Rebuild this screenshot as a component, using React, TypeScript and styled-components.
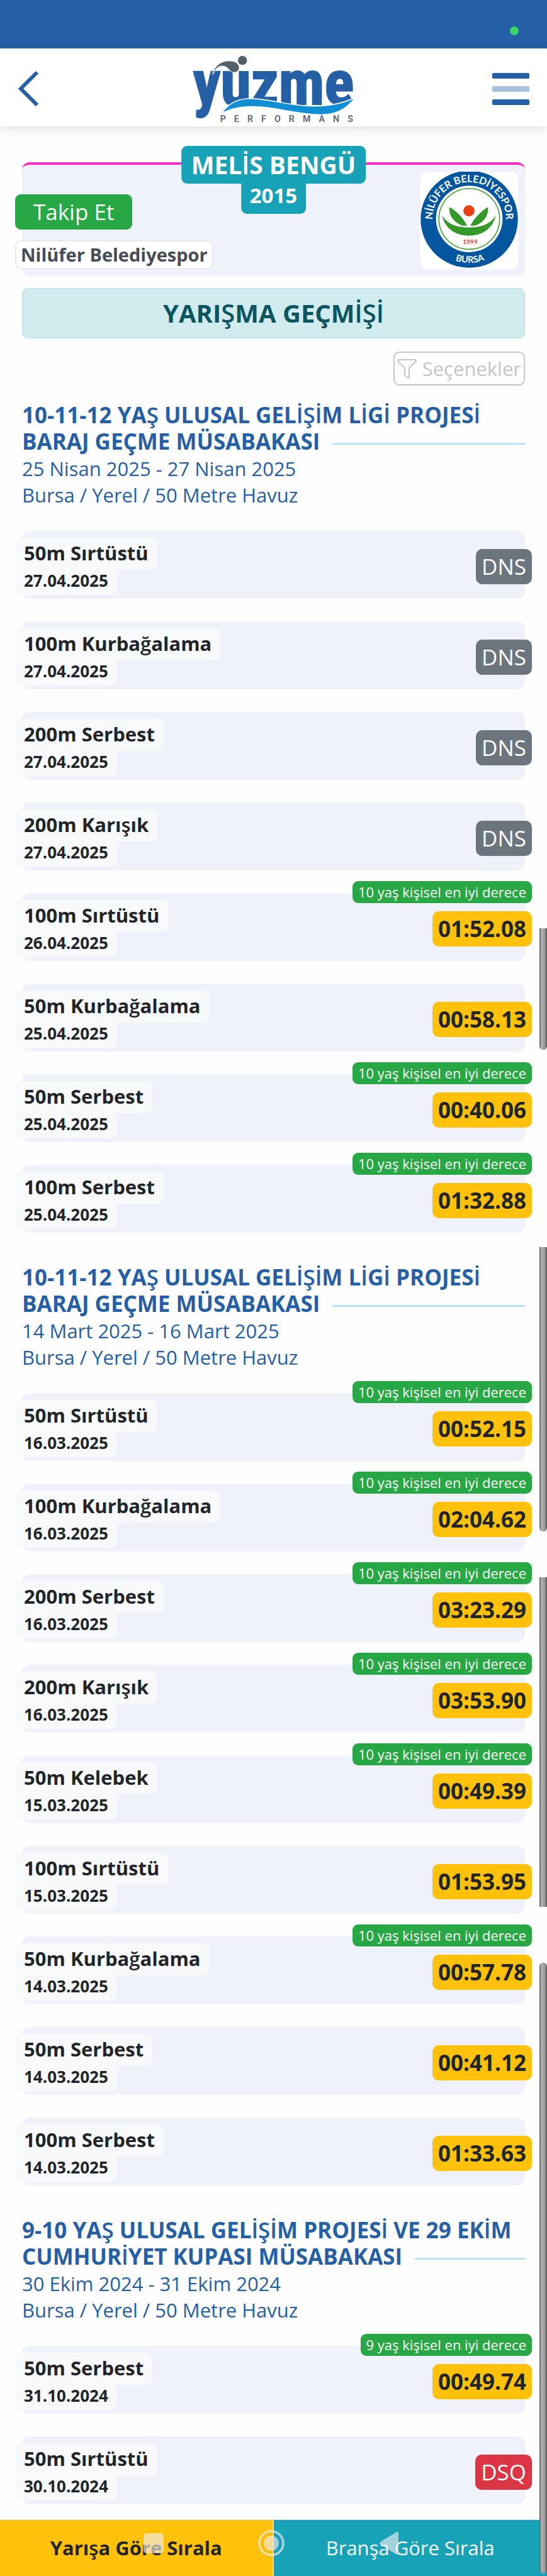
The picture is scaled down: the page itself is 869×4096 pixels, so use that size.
import React from 'react';
import styled, { createGlobalStyle } from 'styled-components';

const GlobalStyle = createGlobalStyle`
  *, *::before, *::after { box-sizing: border-box; }
  body {
    margin: 0;
    background: #fefefe;
    color: #212529;
    font-family: "Open Sans", "Noto Sans", sans-serif;
  }
  button { font-family: inherit; cursor: pointer; }
  h1, h2, h3, p, ul { margin: 0; padding: 0; }
  ul { list-style: none; }
`;

const Page = styled.div`
  position: relative;
`;

const StatusBar = styled.div`
  display: flex;
  justify-content: flex-end;
  align-items: center;
  height: 77px;
  padding: 20px 45px 0 0;
  background: #255fa6;
`;

const CameraDot = styled.span`
  width: 14px;
  height: 14px;
  border-radius: 50%;
  background: #3ad46b;
`;

const Header = styled.header`
  display: flex;
  justify-content: space-between;
  align-items: center;
  height: 124px;
  padding: 4px 28px 0;
  background: #fff;
  box-shadow: 0 4px 16px rgba(0, 0, 0, 0.12);
`;

const IconButton = styled.button`
  display: flex;
  width: 59px;
  padding: 0;
  border: 0;
  background: none;
`;

const MenuBars = styled.span`
  display: flex;
  flex-direction: column;
  gap: 12px;
  width: 100%;
`;

const MenuBar = styled.span<{ $faded?: boolean }>`
  height: 9px;
  border-radius: 2px;
  background: ${(p) => (p.$faded ? '#a8bfdd' : '#255fa6')};
`;

const Main = styled.main`
  padding: 57px 35px 24px;
`;

const ProfileCard = styled.section`
  position: relative;
  display: flex;
  justify-content: space-between;
  align-items: flex-start;
  height: 182px;
  padding: 11px 11px 0 0;
  border-top: 4px solid #fa29cc;
  border-radius: 12px;
  background: #eff2fa;
`;

const NameStack = styled.div`
  position: absolute;
  top: -30px;
  left: 50%;
  transform: translateX(-50%);
  display: flex;
  flex-direction: column;
  align-items: center;
  color: #fff;
  font-weight: 700;
  white-space: nowrap;
`;

const AthleteName = styled.h1`
  padding: 0 16px;
  border-radius: 9px;
  background: #18a2b8;
  font-size: 39px;
  line-height: 60px;
`;

const BirthYear = styled.span`
  margin-top: -6px;
  padding: 0 14px 4px;
  border-radius: 9px;
  background: #18a2b8;
  font-size: 33px;
  line-height: 50px;
`;

const ProfileInfo = styled.div`
  display: flex;
  flex-direction: column;
  align-items: flex-start;
  gap: 17px;
  margin: 36px 0 0 -11px;
`;

const FollowButton = styled.button`
  padding: 0 29px;
  border: 0;
  border-radius: 9px;
  background: #28a745;
  color: #fff;
  font-size: 35px;
  line-height: 56px;
`;

const ClubName = styled.span`
  padding: 0 7px;
  border: 2px solid #e6e9ee;
  border-radius: 9px;
  background: #fff;
  color: #454c56;
  font-size: 29px;
  font-weight: 700;
  line-height: 42px;
`;

const CrestFrame = styled.div`
  display: flex;
  width: 155px;
  height: 155px;
  border-radius: 12px;
  background: #fff;
  overflow: hidden;
`;

const PageTitle = styled.h2`
  margin-top: 18px;
  border: 2px solid #c3e6eb;
  border-radius: 9px;
  background: #d1ebef;
  color: #0c5460;
  font-size: 40px;
  font-weight: 700;
  line-height: 76px;
  text-align: center;
`;

const Toolbar = styled.div`
  display: flex;
  justify-content: flex-end;
  padding: 21px 0 26px;
`;

const OptionsButton = styled.button`
  display: flex;
  align-items: center;
  gap: 9px;
  padding: 0 4px;
  border: 2px solid #c6c6c6;
  border-radius: 9px;
  background: none;
  color: #c6c6c6;
  font-size: 31px;
  line-height: 50px;
`;

const Meets = styled.div`
  display: flex;
  flex-direction: column;
  gap: 50px;
`;

const MeetHeader = styled.header`
  margin-bottom: 36px;
  color: #255fa6;
`;

const MeetTitle = styled.h3`
  overflow-x: clip;
  overflow-y: visible;
  font-size: 35px;
  font-weight: 700;
  line-height: 42px;

  &::after {
    content: '';
    display: inline-block;
    width: 100%;
    height: 3px;
    margin: 0 -100% 0 20px;
    background: #b8e3fb;
    vertical-align: middle;
  }
`;

const MeetMeta = styled.p`
  padding-top: 1px;
  font-size: 31px;
  line-height: 42px;
`;

const RaceList = styled.ul`
  display: flex;
  flex-direction: column;
  gap: 36px;
`;

const RaceRow = styled.li`
  position: relative;
  display: flex;
  justify-content: space-between;
  align-items: flex-start;
  height: 108px;
  border-radius: 12px;
  background: #eff2fa;
`;

const RaceInfo = styled.div`
  display: flex;
  flex-direction: column;
  align-items: flex-start;
  margin: 11px 0 0 -11px;
  font-weight: 700;
`;

const RaceName = styled.span`
  padding: 0 14px 2px;
  border-radius: 9px;
  background: #f8f9fb;
  font-size: 31px;
  line-height: 49px;
`;

const RaceDate = styled.time`
  margin-top: -3px;
  padding: 0 14px 3px;
  border-radius: 9px;
  background: #f8f9fb;
  font-size: 26px;
  line-height: 40px;
`;

type Kind = 'time' | 'dns' | 'dsq';
const resultColors: Record<Kind, string> = { time: '#ffc10a', dns: '#6c757d', dsq: '#dc3545' };

const Result = styled.span<{ $kind: Kind }>`
  margin: 29px -11px 0 0;
  padding: 0 9px;
  border-radius: 10px;
  background: ${(p) => resultColors[p.$kind]};
  color: ${(p) => (p.$kind === 'time' ? '#212529' : '#fff')};
  font-size: 35px;
  font-weight: ${(p) => (p.$kind === 'time' ? 700 : 400)};
  line-height: 56px;
`;

const BestBadge = styled.span`
  position: absolute;
  top: -19px;
  right: -11px;
  padding: 0 9px;
  border-radius: 9px;
  background: #28a745;
  color: #fff;
  font-size: 22px;
  line-height: 35px;
`;

const SortBar = styled.footer`
  position: sticky;
  bottom: 0;
  display: grid;
  grid-template-columns: 1fr 1fr;
`;

const SortButton = styled.button<{ $active?: boolean }>`
  height: 90px;
  padding: 0 0 2px;
  border: 0;
  border-top: 1px solid #d9dfe0;
  border-right: ${(p) => (p.$active ? '2px solid #d3e2d8' : '0')};
  background: ${(p) => (p.$active ? '#ffc10a' : '#18a2b8')};
  color: ${(p) => (p.$active ? '#212529' : '#fff')};
  font-size: 31px;
  font-weight: ${(p) => (p.$active ? 700 : 400)};
`;

const SystemNav = styled.nav`
  position: absolute;
  top: 16px;
  left: 0;
  right: 7px;
  display: flex;
  justify-content: center;
  gap: 143px;
`;

const SystemButton = styled.button`
  display: flex;
  width: 44px;
  height: 46px;
  padding: 0;
  border: 0;
  background: none;

  svg { filter: drop-shadow(0 1px 1px rgba(0, 0, 0, 0.2)); }
`;

const ScrollThumb = styled.div<{ $top: number; $length: number; $radius: string }>`
  position: absolute;
  z-index: 1;
  top: ${(p) => p.$top}px;
  right: 0;
  width: 12px;
  height: ${(p) => p.$length}px;
  border-radius: ${(p) => p.$radius};
  border: solid #5f5f5f;
  border-width: 0 1px 0 1px;
  background: linear-gradient(to right, #7a7a7a 0, #b4b4b4 25%, #8f8f8f 85%, #555 100%);
`;

const Light = styled.span`
  font-weight: 600;
`;

const Turkish = ({ children }: { children: string }) => (
  <>
    {children.split(/([ŞİşğĞ]+)/).map((part, i) => (i % 2 ? <Light key={i}>{part}</Light> : part))}
  </>
);

const BrandLogo = () => (
  <svg width="258" height="107" viewBox="120 55 962 400" role="img" aria-label="yüzme performans">
    <text
      x="122"
      y="348"
      fill="#255fa6"
      stroke="#255fa6"
      strokeWidth="8"
      fontFamily='"Roboto Condensed", Roboto, sans-serif'
      fontWeight="700"
      fontSize="366"
    >
      yuzme
    </text>
    <path
      d="M238 168C250 118 288 90 335 90C375 90 395 108 394 130C392 148 378 157 362 155C336 152 330 118 296 117C270 117 252 136 238 168Z"
      fill="#53616b"
      stroke="#fff"
      strokeWidth="6"
      paintOrder="stroke"
    />
    <circle cx="415" cy="85" r="27" fill="#53616b" stroke="#fff" strokeWidth="6" paintOrder="stroke" />
    <path
      d="M300 392C350 326 410 314 470 315C590 320 720 362 840 360C930 358 1010 345 1075 312C1020 385 950 405 880 405C740 405 600 355 470 357C400 357 340 372 300 392Z"
      fill="#118fd5"
      stroke="#fff"
      strokeWidth="12"
      paintOrder="stroke"
    />
    <text x="282" y="450" fill="#5d6872" fontFamily="Roboto, sans-serif" fontWeight="600" fontSize="53" letterSpacing="49">
      PERFORMANS
    </text>
  </svg>
);

const ClubCrest = () => (
  <svg width="155" height="155" viewBox="92 90 576 578" role="img" aria-label="Nilüfer Belediyespor Bursa 1999">
    <defs>
      <path id="crest-top" d="M241 538A218 218 0 1 1 519 538" />
      <path id="crest-bottom" d="M198 556A260 260 0 0 0 562 556" />
    </defs>
    <circle cx="380" cy="372" r="288" fill="#04569f" />
    <circle cx="380" cy="370" r="197" fill="#fff" />
    <circle cx="380" cy="370" r="180" fill="none" stroke="#3a9d32" strokeWidth="6" />
    <circle cx="378" cy="322" r="33" fill="#ea3f12" />
    <path d="M262 300C305 325 340 358 367 410L338 410C285 388 258 350 262 300Z" fill="#339a2a" />
    <path d="M491 300C450 325 414 358 386 410L416 410C468 388 495 350 491 300Z" fill="#339a2a" />
    <path d="M219 350C250 398 300 421 378 421C456 421 506 398 537 350C520 425 460 469 378 469C296 469 236 425 219 350Z" fill="#339a2a" />
    <text x="386" y="518" fill="#d9482b" fontFamily="Lato, sans-serif" fontWeight="700" fontSize="38" textAnchor="middle">
      1999
    </text>
    <g fill="#fff" fontFamily="Lato, sans-serif" fontWeight="700" textAnchor="middle">
      <text fontSize="60">
        <textPath href="#crest-top" startOffset="50%">NİLÜFER BELEDİYESPOR</textPath>
      </text>
      <text fontSize="54">
        <textPath href="#crest-bottom" startOffset="51%">BURSA</textPath>
      </text>
    </g>
  </svg>
);

type Race = { name: string; date: string; result: string; best?: number };
type Meet = { title: string; dates: string; place: string; races: Race[] };

const race = (name: string, date: string, result: string, best?: number): Race => ({ name, date, result, best });

const meets: Meet[] = [
  {
    title: '10-11-12 YAŞ ULUSAL GELİŞİM LİGİ PROJESİ BARAJ GEÇME MÜSABAKASI',
    dates: '25 Nisan 2025 - 27 Nisan 2025',
    place: 'Bursa / Yerel / 50 Metre Havuz',
    races: [
      race('50m Sırtüstü', '27.04.2025', 'DNS'),
      race('100m Kurbağalama', '27.04.2025', 'DNS'),
      race('200m Serbest', '27.04.2025', 'DNS'),
      race('200m Karışık', '27.04.2025', 'DNS'),
      race('100m Sırtüstü', '26.04.2025', '01:52.08', 10),
      race('50m Kurbağalama', '25.04.2025', '00:58.13'),
      race('50m Serbest', '25.04.2025', '00:40.06', 10),
      race('100m Serbest', '25.04.2025', '01:32.88', 10),
    ],
  },
  {
    title: '10-11-12 YAŞ ULUSAL GELİŞİM LİGİ PROJESİ BARAJ GEÇME MÜSABAKASI',
    dates: '14 Mart 2025 - 16 Mart 2025',
    place: 'Bursa / Yerel / 50 Metre Havuz',
    races: [
      race('50m Sırtüstü', '16.03.2025', '00:52.15', 10),
      race('100m Kurbağalama', '16.03.2025', '02:04.62', 10),
      race('200m Serbest', '16.03.2025', '03:23.29', 10),
      race('200m Karışık', '16.03.2025', '03:53.90', 10),
      race('50m Kelebek', '15.03.2025', '00:49.39', 10),
      race('100m Sırtüstü', '15.03.2025', '01:53.95'),
      race('50m Kurbağalama', '14.03.2025', '00:57.78', 10),
      race('50m Serbest', '14.03.2025', '00:41.12'),
      race('100m Serbest', '14.03.2025', '01:33.63'),
    ],
  },
  {
    title: '9-10 YAŞ ULUSAL GELİŞİM PROJESİ VE 29 EKİM CUMHURİYET KUPASI MÜSABAKASI',
    dates: '30 Ekim 2024 - 31 Ekim 2024',
    place: 'Bursa / Yerel / 50 Metre Havuz',
    races: [
      race('50m Serbest', '31.10.2024', '00:49.74', 9),
      race('50m Sırtüstü', '30.10.2024', 'DSQ'),
    ],
  },
];

const kindOf = (result: string): Kind => (result === 'DNS' ? 'dns' : result === 'DSQ' ? 'dsq' : 'time');

const RaceItem = ({ name, date, result, best }: Race) => (
  <RaceRow>
    <RaceInfo>
      <RaceName>
        <Turkish>{name}</Turkish>
      </RaceName>
      <RaceDate>{date}</RaceDate>
    </RaceInfo>
    {best && <BestBadge>{`${best} yaş kişisel en iyi derece`}</BestBadge>}
    <Result $kind={kindOf(result)}>{result}</Result>
  </RaceRow>
);

export default function App() {
  return (
    <Page>
      <GlobalStyle />
      <StatusBar>
        <CameraDot />
      </StatusBar>
      <Header>
        <IconButton aria-label="Geri">
          <svg width="34" height="58" viewBox="0 0 34 58" fill="none" stroke="#255fa6" strokeWidth="6">
            <path d="M31 3L5 29L31 55" />
          </svg>
        </IconButton>
        <BrandLogo />
        <IconButton aria-label="Menü">
          <MenuBars>
            <MenuBar />
            <MenuBar $faded />
            <MenuBar />
          </MenuBars>
        </IconButton>
      </Header>
      <Main>
        <ProfileCard>
          <NameStack>
            <AthleteName>
              <Turkish>MELİS BENGÜ</Turkish>
            </AthleteName>
            <BirthYear>2015</BirthYear>
          </NameStack>
          <ProfileInfo>
            <FollowButton>Takip Et</FollowButton>
            <ClubName>Nilüfer Belediyespor</ClubName>
          </ProfileInfo>
          <CrestFrame>
            <ClubCrest />
          </CrestFrame>
        </ProfileCard>
        <PageTitle>
          <Turkish>YARIŞMA GEÇMİŞİ</Turkish>
        </PageTitle>
        <Toolbar>
          <OptionsButton>
            <svg width="31" height="31" viewBox="0 0 31 31" fill="none" stroke="#c6c6c6" strokeWidth="2" strokeLinejoin="round">
              <path d="M2 1H29Q31 2 29 4L19 14V29Q18 31 16 29L12 26V14L2 4Q0 2 2 1Z" />
            </svg>
            Seçenekler
          </OptionsButton>
        </Toolbar>
        <Meets>
          {meets.map((meet) => (
            <section key={meet.dates}>
              <MeetHeader>
                <MeetTitle>
                  <Turkish>{meet.title}</Turkish>
                </MeetTitle>
                <MeetMeta>
                  {meet.dates}
                  <br />
                  {meet.place}
                </MeetMeta>
              </MeetHeader>
              <RaceList>
                {meet.races.map((item) => (
                  <RaceItem key={item.name} {...item} />
                ))}
              </RaceList>
            </section>
          ))}
        </Meets>
      </Main>
      <SortBar>
        <SortButton $active>
          <Turkish>Yarışa Göre Sırala</Turkish>
        </SortButton>
        <SortButton>Branşa Göre Sırala</SortButton>
        <SystemNav aria-label="Sistem">
          <SystemButton aria-label="Son uygulamalar">
            <svg width="44" height="46" viewBox="0 0 44 46" fill="#fff" fillOpacity="0.6">
              <rect x="6" y="6" width="32" height="32" rx="5" />
            </svg>
          </SystemButton>
          <SystemButton aria-label="Ana ekran">
            <svg width="44" height="46" viewBox="0 0 44 46" fill="none">
              <circle cx="22" cy="22" r="19" stroke="#fff" strokeOpacity="0.6" strokeWidth="4" />
              <circle cx="22" cy="22" r="12" fill="#fff" fillOpacity="0.6" />
            </svg>
          </SystemButton>
          <SystemButton aria-label="Geri dön">
            <svg width="44" height="46" viewBox="0 0 44 46" fill="#fff" fillOpacity="0.6">
              <path d="M8 20L34 4Q37 3 37 6V38Q37 41 34 40L8 24Q6 22 8 20Z" />
            </svg>
          </SystemButton>
        </SystemNav>
      </SortBar>
      <ScrollThumb $top={1476} $length={193} $radius="0 0 6px 6px" />
      <ScrollThumb $top={1983} $length={452} $radius="0 0 6px 6px" />
      <ScrollThumb $top={2508} $length={524} $radius="0" />
      <ScrollThumb $top={3121} $length={971} $radius="6px" />
    </Page>
  );
}
